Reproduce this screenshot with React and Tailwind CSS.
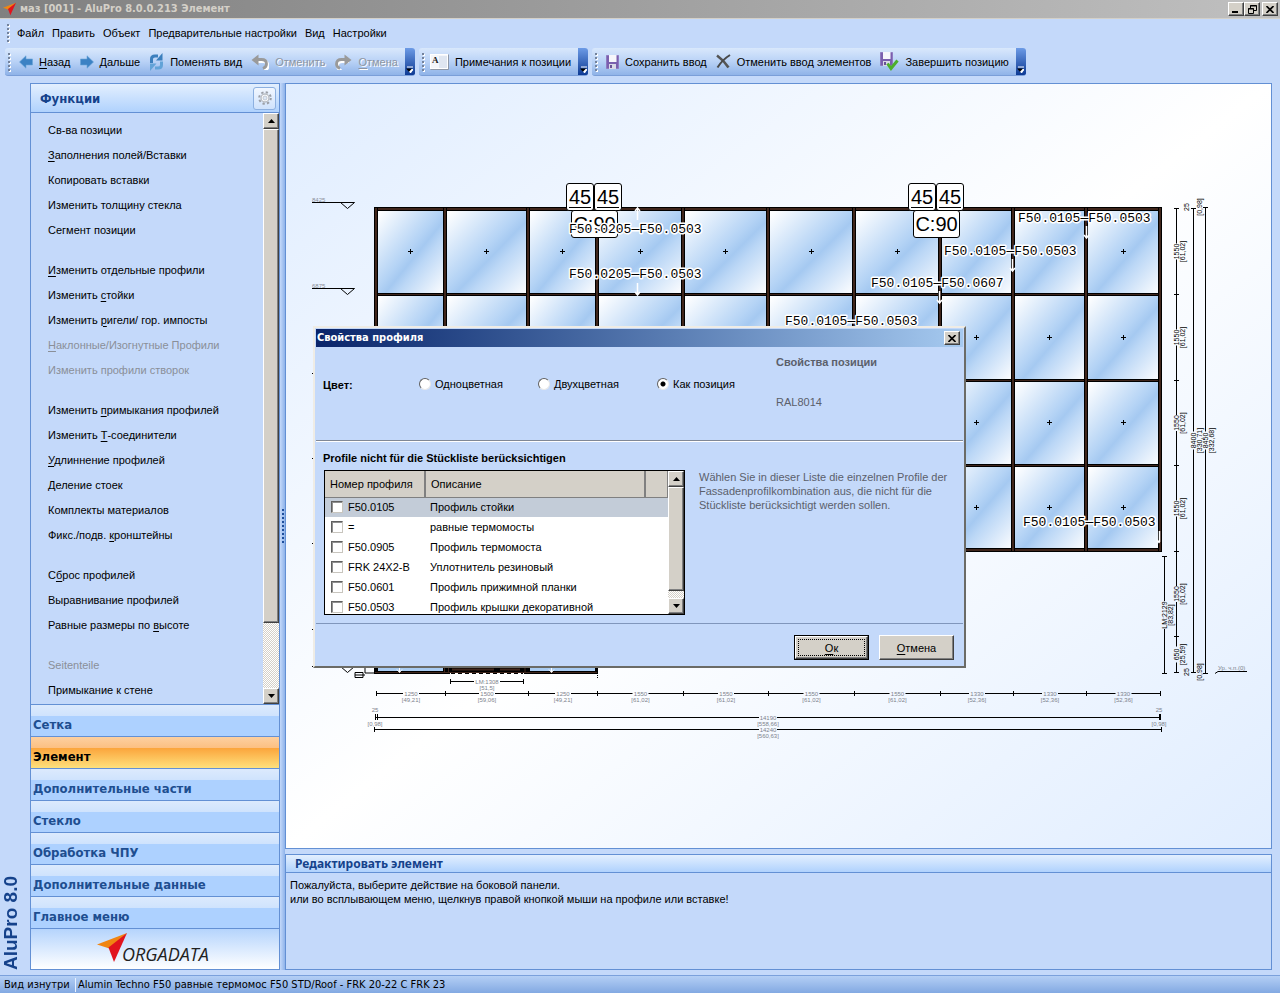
import React from 'react';

const SANS = "font-['Liberation_Sans',Arial,sans-serif]";
const HEAD = "font-['DejaVu_Sans_Condensed','DejaVu_Sans',sans-serif]";

/* "_" marks the accelerator letter that follows it */
function Accel({ text }) {
  const i = text.indexOf('_');
  if (i < 0) return <>{text}</>;
  return (
    <>
      {text.slice(0, i)}
      <span className="underline underline-offset-2">{text[i + 1]}</span>
      {text.slice(i + 2)}
    </>
  );
}

function BrandMark({ className }) {
  return (
    <svg viewBox="0 0 30 29" className={className} aria-hidden="true">
      <path d="M30 0 0 11.500 14 16z" fill="#f08512" />
      <path d="M30 0 11.500 14.500 17 29z" fill="#e1131d" />
    </svg>
  );
}

/* ---------- toolbar icons ---------- */

function ArrowLeft() {
  return (
    <svg width="14" height="14" viewBox="0 0 14 14" aria-hidden="true">
      <path d="M0.500 7 7 0.800V4h6.500v6H7v3.200z" fill="#3c82c4" stroke="#6aa5d8" strokeWidth="0.600" />
    </svg>
  );
}
function ArrowRight() {
  return (
    <svg width="14" height="14" viewBox="0 0 14 14" aria-hidden="true">
      <path d="M13.500 7 7 0.800V4H0.500v6H7v3.200z" fill="#3c82c4" stroke="#6aa5d8" strokeWidth="0.600" />
    </svg>
  );
}
function Swap() {
  return (
    <svg width="15" height="18" viewBox="0 0 15 18" aria-hidden="true">
      <path d="M2.500 10V6Q2.500 3 6 3h3" fill="none" stroke="#3b7fbd" strokeWidth="3" />
      <path d="M7 7.500h6.500V0z" fill="#3b7fbd" />
      <path d="M12.500 8.500v3.500Q12.500 15 9 15H6" fill="none" stroke="#62a3d8" strokeWidth="3" />
      <path d="M7.500 10.500H1V18z" fill="#62a3d8" />
    </svg>
  );
}
function Undo() {
  return (
    <svg width="18" height="16" viewBox="0 0 18 16" aria-hidden="true">
      <path d="M4 6.500h7q5 0 5 4.500 0 3.500-4 4.500" fill="none" stroke="#fff" strokeWidth="2.800" transform="translate(1 1)" />
      <path d="M0.500 6 7.500 0.500v11z" fill="#9a9a9a" />
      <path d="M5 5.500h5.500q5 0 5 4.500 0 3-3.500 4.500" fill="none" stroke="#9a9a9a" strokeWidth="2.800" />
    </svg>
  );
}
function Redo() {
  return (
    <svg width="18" height="16" viewBox="0 0 18 16" aria-hidden="true">
      <path d="M14 6.500H7.500q-5 0-5 4.500 0 3.500 4 4.500" fill="none" stroke="#fff" strokeWidth="2.800" transform="translate(1 1)" />
      <path d="M17.500 6 10.500 0.500v11z" fill="#9a9a9a" />
      <path d="M13 5.500H7.500q-5 0-5 4.500 0 3 3.500 4.500" fill="none" stroke="#9a9a9a" strokeWidth="2.800" />
    </svg>
  );
}
function Note() {
  return (
    <svg width="19" height="16" viewBox="0 0 19 16" aria-hidden="true">
      <rect x="0.500" y="0.500" width="17" height="14" fill="#f4f6fa" stroke="#fff" />
      <path d="M0.500 15.500h18V0.500" fill="none" stroke="#8e98a8" />
      <rect x="9" y="2" width="8" height="12" fill="#dfe6f1" />
      <text x="2" y="9" fontSize="9" fontWeight="bold" fontFamily="Liberation Serif, serif" fill="#222">A</text>
    </svg>
  );
}
function Save({ check }) {
  return (
    <svg width={check ? 19 : 13} height={check ? 19 : 14} viewBox={check ? '0 0 19 19' : '0 0 13 14'} aria-hidden="true">
      <path d="M0.500 0.500h12v13H0.500z" fill="#7a5fae" stroke="#8f7ac0" />
      <rect x="3" y="0" width="7.500" height="7" fill="#f6f6fb" />
      <rect x="3" y="9" width="7" height="5" fill="#d9d9e6" />
      <rect x="4" y="10" width="2" height="3" fill="#6a5296" />
      {check && <path d="m7.500 11.500 3.500 5 6.500-8" fill="none" stroke="#4caf2c" strokeWidth="3" />}
    </svg>
  );
}
function Cross() {
  return (
    <svg width="15" height="15" viewBox="0 0 15 15" aria-hidden="true">
      <path d="M1 1.500q7 5 11.500 12" fill="none" stroke="#555" strokeWidth="2.600" />
      <path d="M14 1Q6 6 1.500 13.500" fill="none" stroke="#4a4a4a" strokeWidth="2" />
    </svg>
  );
}
function Gear() {
  return (
    <svg width="16" height="16" viewBox="0 0 16 16" aria-hidden="true">
      <circle cx="8" cy="8" r="5.800" fill="none" stroke="#9a9ea6" strokeWidth="2" strokeDasharray="2.280 2.280" />
      <circle cx="8" cy="8" r="4" fill="#fbfcfe" stroke="#b9bdc4" strokeWidth="1.400" />
      <circle cx="8" cy="8" r="2" fill="#dce8f8" stroke="#b5b9c0" strokeWidth="0.700" />
    </svg>
  );
}

function Grip() {
  return (
    <span className="flex flex-col gap-[2px]" aria-hidden="true">
      {[0, 1, 2, 3, 4].map((i) => (
        <span key={i} className="h-[2px] w-[2px] bg-[#74839c] shadow-[1px_1px_0_#ffffff]" />
      ))}
    </span>
  );
}

function ToolStrip({ items, gap = 'gap-[9px]' }) {
  return (
    <div className="flex h-[28px] overflow-hidden rounded-[3px] border-b border-[#7a9ed8] bg-linear-to-b from-[#d9e8fc] via-[#b9d2f6] to-[#8fb3e8]">
      <div className={'flex items-center pr-[7px] pl-[3px] ' + gap}>
        <Grip />
        {items.map(({ icon: Icon, text, disabled, ...rest }) => (
          <button
            key={text}
            type="button"
            disabled={disabled}
            className={
              'flex items-center gap-[6px] whitespace-nowrap ' +
              (disabled ? 'text-[#8d95a3] [text-shadow:1px_1px_0_#fff]' : 'text-black')
            }
          >
            <Icon {...rest} />
            <span>
              <Accel text={text} />
            </span>
          </button>
        ))}
      </div>
      <button
        type="button"
        aria-label="Параметры панели"
        className="flex w-[10px] items-end justify-center bg-linear-to-b from-[#6d9be6] to-[#0d3a94] pb-[2px]"
      >
        <svg width="7" height="7" viewBox="0 0 7 7" aria-hidden="true">
          <path d="M1 1h6M2.500 3.500h4.500L4.500 7z" stroke="#fff" fill="#fff" />
          <path d="M0 2.500h6L3 5.800z" fill="#000" />
        </svg>
      </button>
    </div>
  );
}

const RAISED =
  'border border-t-white border-l-white border-r-[#404040] border-b-[#404040] bg-[#d4d0c8] shadow-[inset_-1px_-1px_0_#808080]';

function ScrollBar({ thumb, label }) {
  return (
    <div
      className="flex w-[16px] shrink-0 flex-col bg-[#ebe8e3] bg-[repeating-conic-gradient(#d4d0c8_0_25%,#ffffff_0_50%)] bg-size-[2px_2px]"
      aria-label={label}
    >
      <button type="button" aria-label="Вверх" className={'flex h-[16px] shrink-0 items-center justify-center ' + RAISED}>
        <svg width="7" height="4" viewBox="0 0 7 4" aria-hidden="true"><path d="M3.500 0 7 4H0z" /></svg>
      </button>
      <div className={thumb + ' ' + RAISED} />
      <div className="flex-1" />
      <button type="button" aria-label="Вниз" className={'flex h-[16px] shrink-0 items-center justify-center ' + RAISED}>
        <svg width="7" height="4" viewBox="0 0 7 4" aria-hidden="true"><path d="M3.500 4 7 0H0z" /></svg>
      </button>
    </div>
  );
}

/* ---------- sidebar ---------- */

const FUNCTION_GROUPS = [
  ['Св-ва позиции', '_Заполнения полей/Вставки', 'Копировать вставки', 'Изменить толщину стекла', 'Сегмент позиции'],
  ['_Изменить отдельные профили', 'Изменить _стойки', 'Изменить _ригели/ гор. импосты', '!_Наклонные/Изогнутные Профили', '!Изменить профили створок'],
  ['Изменить _примыкания профилей', 'Изменить _Т-соединители', '_Удлиннение профилей', '_Деление стоек', 'Комплекты материалов', 'Фикс./подв. _кронштейны'],
  ['С_брос профилей', 'Выравнивание профилей', 'Равные размеры по _высоте'],
  ['!Seitenteile', 'Примыкание к стене'],
];

const SECTIONS = ['Сетка', 'Элемент', 'Дополнительные части', 'Стекло', 'Обработка ЧПУ', 'Дополнительные данные', 'Главное меню'];

function Sidebar() {
  return (
    <aside className="flex w-[250px] shrink-0 flex-col border border-[#6390d4]">
      <header className="flex h-[29px] shrink-0 items-center justify-between border-b border-[#6390d4] bg-linear-to-b from-[#e3effe] to-[#b0d2fd] pr-[3px] pl-[9px]">
        <h2 className={'pt-[2px] text-[13px] font-bold text-[#15428b] ' + HEAD}>Функции</h2>
        <button type="button" aria-label="Настройка" className="flex h-[23px] w-[23px] items-center justify-center rounded-[3px] border border-[#8db0e0] bg-linear-to-b from-[#f2f7ff] to-[#cfe2fc]">
          <Gear />
        </button>
      </header>
      <div className="flex min-h-0 flex-1">
        <div className="flex min-w-0 flex-1 basis-0 flex-col gap-[15px] overflow-hidden pt-[4px] pl-[17px]">
          {FUNCTION_GROUPS.map((group) => (
            <ul key={group[0]}>
              {group.map((item) => {
                const off = item[0] === '!';
                return (
                  <li key={item} className="flex h-[25px] items-center">
                    <button type="button" disabled={off} className={'whitespace-nowrap ' + (off ? 'text-[#8a8f98]' : 'text-black')}>
                      <Accel text={off ? item.slice(1) : item} />
                    </button>
                  </li>
                );
              })}
            </ul>
          ))}
        </div>
        <ScrollBar thumb="h-[494px]" label="Прокрутка функций" />
      </div>
      <nav className={'shrink-0 text-[13px] font-bold ' + HEAD}>
        {SECTIONS.map((s) => (
          <button
            key={s}
            type="button"
            className={
              'flex h-[32px] w-full items-end border-t border-[#6390d4] pb-[2px] pl-[2px] text-left leading-[19px] ' +
              (s === 'Элемент'
                ? 'bg-[linear-gradient(#fdd0a0_0,#fcc082_35%,#fba53c_36%,#fee07c_100%)] text-black'
                : 'bg-[linear-gradient(#dceafd_0,#cfe3fd_35%,#add1ff_36%,#add1ff_100%)] text-[#1e4e90]')
            }
          >
            {s}
          </button>
        ))}
      </nav>
      <div className="flex h-[41px] shrink-0 items-start justify-center border-t border-[#6390d4] bg-linear-to-b from-[#b5d4fc] to-white pt-[4px] pr-[4px]">
        <BrandMark className="mr-[-5px] h-[29px] w-[30px]" />
        <span className="mt-[12px] font-['Open_Sans',sans-serif] text-[18px] leading-[18px] font-medium text-[#222] italic">ORGADATA</span>
      </div>
    </aside>
  );
}

/* ---------- facade drawing ---------- */

const MULLIONS = [376, 445, 528, 597, 683, 768, 854, 940, 1013, 1086, 1160];
const TRANSOMS = [209, 294, 380, 465, 550];
const DIM = 'Liberation Sans, Arial, sans-serif';

function Panes() {
  const out = [];
  for (let r = 0; r < 4; r++) {
    for (let c = 0; c < 10; c++) {
      const x = MULLIONS[c];
      const y = TRANSOMS[r];
      const w = MULLIONS[c + 1] - x;
      const h = TRANSOMS[r + 1] - y;
      const cx = Math.floor(x + w / 2) + 0.5;
      const cy = Math.floor(y + h / 2) + 0.5;
      out.push(
        <g key={r + '-' + c}>
          <rect x={x} y={y} width={w} height={h} fill="url(#glass)" />
          <path d={`M${cx - 2.5} ${cy}h5M${cx} ${cy - 2.5}v5`} stroke="#000" />
        </g>
      );
    }
  }
  return out;
}

function HDim({ x1, x2, y, label, sub, gap = 11 }) {
  const m = (x1 + x2) / 2;
  return (
    <g>
      <path d={`M${x1} ${y}H${m - gap}M${m + gap} ${y}H${x2}M${x1} ${y - 2.5}v5M${x2} ${y - 2.5}v5`} stroke="#000" />
      <text x={m} y={y + 2} textAnchor="middle">{label}</text>
      <text x={m} y={y + 8} textAnchor="middle">{sub}</text>
    </g>
  );
}

function VDim({ x, y1, y2, label, sub, gap = 10 }) {
  const m = (y1 + y2) / 2;
  return (
    <g>
      <path d={`M${x} ${y1}V${m - gap}M${x} ${m + gap}V${y2}M${x - 2.5} ${y1}h5M${x - 2.5} ${y2}h5`} stroke="#000" />
      <text transform={`translate(${x + 2} ${m}) rotate(-90)`} textAnchor="middle">{label}</text>
      <text transform={`translate(${x + 8} ${m}) rotate(-90)`} textAnchor="middle">{sub}</text>
    </g>
  );
}

function VText({ x, y, children }) {
  return <text transform={`translate(${x} ${y}) rotate(-90)`} textAnchor="middle">{children}</text>;
}

function Level({ y, label }) {
  return (
    <g>
      <path d={`M312 ${y}h42.500l-7 6-7-6`} fill="none" stroke="#000" />
      {label && <text x="312" y={y - 1} fontSize="6" fontFamily={DIM} fill="#8a8f99">{label}</text>}
    </g>
  );
}

function Plate({ x, y, w, children, underline }) {
  return (
    <g>
      <rect x={x + 0.5} y={y + 0.5} width={w - 1} height="27" rx="2.500" fill="#fff" stroke="#000" />
      <text x={x + w / 2} y={y + 20.5} textAnchor="middle" fontSize="20" fontFamily={DIM}>{children}</text>
      {underline && <path d={`M${x + 3} ${y + 24.5}h${w - 6}`} stroke="#000" />}
    </g>
  );
}

const PROFILE_LABELS = [
  [569, 233, 'F50.0205—F50.0503'],
  [569, 278, 'F50.0205—F50.0503'],
  [1018, 222, 'F50.0105—F50.0503'],
  [944, 255, 'F50.0105—F50.0503'],
  [871, 287, 'F50.0105—F50.0607'],
  [785, 325, 'F50.0105—F50.0503'],
  [1023, 526, 'F50.0105—F50.0503'],
];

const WIDTHS = [
  ['1250', '[49,21]'], ['1500', '[59,06]'], ['1250', '[49,21]'], ['1550', '[61,02]'], ['1550', '[61,02]'],
  ['1550', '[61,02]'], ['1550', '[61,02]'], ['1330', '[52,36]'], ['1330', '[52,36]'], ['1330', '[52,36]'],
];
const HEIGHTS = [208.5, 294.5, 380.5, 465.5, 551.5, 636.5, 672.5];

function FacadeDrawing() {
  return (
    <svg width="985" height="764" viewBox="286 84 985 764" className="block shrink-0" role="img" aria-label="Чертёж фасада">
      <defs>
        <linearGradient id="glass" x1="0" y1="0" x2="1" y2="1">
          <stop offset="0.050" stopColor="#fdfeff" />
          <stop offset="0.480" stopColor="#b4d3f5" />
          <stop offset="0.560" stopColor="#a5c9f1" />
          <stop offset="0.650" stopColor="#bbd7f6" />
          <stop offset="0.960" stopColor="#f7fafe" />
        </linearGradient>
      </defs>

      <Panes />
      {TRANSOMS.map((y, i) => {
        const edge = i === 0 || i === 4;
        return (
          <g key={y}>
            <rect x="374" y={edge ? y - 2 : y - 1} width="788" height={edge ? 4 : 3} fill="#000" />
            <rect x="375" y={edge ? y - 1 : y} width="786" height={edge ? 2 : 1} fill="#3f251b" />
          </g>
        );
      })}
      {MULLIONS.map((x) => (
        <g key={x}>
          <rect x={x - 2} y="207" width="4" height="345" fill="#000" />
          <rect x={x - 1} y="208" width="2" height="343" fill="#3f251b" />
        </g>
      ))}

      {/* lower storey with the door */}
      <rect x="374" y="640" width="224" height="34" fill="#000" />
      <rect x="378" y="641" width="65" height="30" fill="#a9ccf2" />
      <rect x="530" y="641" width="65" height="30" fill="#a9ccf2" />
      <path d="M375 672.500h222M444.500 641v31M448.500 641v31M525 641v31" stroke="#3f251b" />
      <path d="M452 669.500h42M500 669.500h20" stroke="#3f251b" strokeWidth="2" />
      <path d="M450 674h74" stroke="#fff" strokeWidth="2" />
      <path d="M451 673.500h72" stroke="#000" strokeDasharray="4 3" />
      <path d="M597.500 673v5" stroke="#000" strokeDasharray="1 1" />
      <path d="M355 672.500h8v5h-8zM355 675h10M365 666v7h9" fill="none" stroke="#000" />
      <path d="M399.500 666v6M397 669.500l2.500 3 2.500-3M551.500 666v6M549 669.500l2.500 3 2.500-3" fill="none" stroke="#fff" />

      <Level y={202.5} label="8425" />
      <Level y={288.5} label="6875" />
      <Level y={373.5} />
      <Level y={458.5} />
      <Level y={543.5} />
      <Level y={629.5} />
      <Level y={666.5} />

      <Plate x={566} y={183} w={28} underline>45</Plate>
      <Plate x={594} y={183} w={28} underline>45</Plate>
      <Plate x={571} y={210} w={47}>C:90</Plate>
      <Plate x={908} y={183} w={28} underline>45</Plate>
      <Plate x={936} y={183} w={28} underline>45</Plate>
      <Plate x={913} y={210} w={47}>C:90</Plate>

      <path
        d="M637.500 220v-12m-2.500 3 2.500-3 2.500 3M637.500 283v12m-2.500-3 2.500 3 2.500-3M1086.500 226v12m-2.500-3 2.500 3 2.500-3M1012.500 259v12m-2.500-3 2.500 3 2.500-3M939.500 291v12m-2.500-3 2.500 3 2.500-3M1159.500 531v11m-2.500-2 2.500 3"
        fill="none"
        stroke="#fff"
        strokeWidth="1.500"
      />
      <g fontSize="13" fontFamily="Liberation Mono, monospace" stroke="#fff" strokeWidth="3" strokeLinejoin="round" style={{ paintOrder: 'stroke' }}>
        {PROFILE_LABELS.map(([x, y, t]) => (
          <text key={x + '-' + y} x={x} y={y}>{t}</text>
        ))}
      </g>

      <g fontSize="6" fontFamily={DIM} fill="#7d828c">
        {WIDTHS.map(([label, sub], i) => (
          <HDim key={i} x1={MULLIONS[i] + 0.5} x2={MULLIONS[i + 1] + 0.5} y={693.5} label={label} sub={sub} gap={8} />
        ))}
        <HDim x1={450.5} x2={523.5} y={681.5} label="LM:1308" sub="[51,5]" gap={13} />
        <HDim x1={375.5} x2={1160.5} y={717.5} label="14190" sub="[558,66]" gap={9} />
        <HDim x1={374.5} x2={1161.5} y={729.5} label="14240" sub="[560,63]" gap={9} />
        <text x="375" y="712" textAnchor="middle">25</text>
        <text x="375" y="726" textAnchor="middle">[0,98]</text>
        <text x="1159" y="712" textAnchor="middle">25</text>
        <text x="1159" y="726" textAnchor="middle">[0,98]</text>
        <text x="1218" y="670">Ур. ч.п.(0)</text>
      </g>
      <path d="M375.500 714v6M377.500 714v6M1159.500 714v6M1160.500 714v6M1215 673.500l3-2h29" fill="none" stroke="#000" />

      <g fontSize="7" fontFamily={DIM} fill="#000">
        {HEIGHTS.slice(0, 6).map((y, i) => (
          <VDim key={y} x={1176.5} y1={y} y2={HEIGHTS[i + 1]} label={i < 5 ? '1550' : '650'} sub={i < 5 ? '[61,02]' : '[25,59]'} gap={8} />
        ))}
        <VDim x={1164.5} y1={556.5} y2={673.5} label="LM:2129" sub="[83,82]" gap={14} />
        <VDim x={1193.5} y1={208.5} y2={672.5} label="8400" sub="[330,71]" gap={9} />
        <VDim x={1205.5} y1={207.5} y2={673.5} label="8450" sub="[332,68]" gap={9} />
        <VText x={1189} y={207}>25</VText>
        <VText x={1202} y={207}>[0,98]</VText>
        <VText x={1189} y={672}>25</VText>
        <VText x={1202} y={672}>[0,98]</VText>
      </g>
    </svg>
  );
}

/* ---------- dialog ---------- */

const PROFILES = [
  ['F50.0105', 'Профиль стойки'],
  ['=', 'равные термомосты'],
  ['F50.0905', 'Профиль термомоста'],
  ['FRK 24X2-B', 'Уплотнитель резиновый'],
  ['F50.0601', 'Профиль прижимной планки'],
  ['F50.0503', 'Профиль крышки декоративной'],
];

function ProfileDialog() {
  return (
    <section
      role="dialog"
      aria-labelledby="dialog-title"
      className="absolute top-[242px] left-[27px] flex w-[653px] flex-col border-2 border-t-[#efece5] border-l-[#efece5] border-r-[#6b6b66] border-b-[#6b6b66] bg-[#c4d9fa] p-px"
    >
      <header className="flex h-[18px] items-center justify-between bg-linear-to-r from-[#0a246a] to-[#a6caf0] pr-[3px] pl-px text-white">
        <h2 id="dialog-title" className={'font-bold ' + HEAD}>Свойства профиля</h2>
        <button type="button" aria-label="Закрыть" className={'flex h-[14px] w-[16px] items-center justify-center ' + RAISED}>
          <svg width="8" height="7" viewBox="0 0 8 7" aria-hidden="true"><path d="m0.500 0 7 7m0-7-7 7" stroke="#000" strokeWidth="1.600" /></svg>
        </button>
      </header>

      <fieldset className="flex h-[95px] border-b border-white pl-[7px] shadow-[inset_0_-1px_0_#808896]">
        <span className="w-[96px] pt-[31px] font-bold">Цвет:</span>
        {['Одноцветная', 'Двухцветная', 'Как позиция'].map((t, i) => (
          <label key={t} className="flex h-[74px] w-[119px] items-center gap-[4px]">
            <input
              type="radio"
              name="colour"
              defaultChecked={i === 2}
              className="h-[12px] w-[12px] appearance-none rounded-full border border-t-[#606060] border-l-[#606060] border-r-[#e8e8e8] border-b-[#e8e8e8] bg-white checked:bg-[radial-gradient(circle,#000_0_2px,#fff_3px)]"
            />
            {t}
          </label>
        ))}
        <div className="flex flex-col gap-[26px] pt-[8px] text-[#5b606b]">
          <strong>Свойства позиции</strong>
          <span>RAL8014</span>
        </div>
      </fieldset>

      <div className="flex h-[182px] flex-col gap-[5px] border-b border-[#8096bb] pt-[9px] pl-[7px]">
        <h3 className="font-bold">Profile nicht für die Stückliste berücksichtigen</h3>
        <div className="flex gap-[14px]">
          <div className="ml-px flex h-[145px] w-[361px] border border-black bg-white">
            <div className="min-w-0 flex-1 overflow-hidden">
              <table className="w-full table-fixed border-collapse text-left">
                <thead>
                  <tr className="h-[26px] bg-[#d4d0c8]">
                    <th className="w-[100px] border-r-2 border-b border-[#808080] pl-[5px] font-normal">Номер профиля</th>
                    <th className="w-[220px] border-r-2 border-b border-[#808080] pl-[5px] font-normal">Описание</th>
                    <th className="border-r border-b border-[#808080]" aria-label="Прочее" />
                  </tr>
                </thead>
                <tbody>
                  {PROFILES.map(([no, name], i) => (
                    <tr key={no} className={'h-[20px] ' + (i === 0 ? 'bg-[#c3ccd8]' : 'bg-white')}>
                      <td className="pl-[6px]">
                        <label className="flex items-center gap-[5px] whitespace-nowrap">
                          <input
                            type="checkbox"
                            className="h-[12px] w-[12px] appearance-none border border-t-[#606060] border-l-[#606060] border-r-[#c8c5be] border-b-[#c8c5be] bg-white shadow-[inset_1px_1px_0_#909090]"
                          />
                          {no}
                        </label>
                      </td>
                      <td className="pl-[5px] whitespace-nowrap" colSpan={2}>{name}</td>
                    </tr>
                  ))}
                </tbody>
              </table>
            </div>
            <ScrollBar thumb="h-[104px]" label="Прокрутка списка" />
          </div>
          <p className="w-[250px] text-[#5b606b]">
            Wählen Sie in dieser Liste die einzelnen Profile der Fassadenprofilkombination aus, die nicht für die Stückliste berücksichtigt werden sollen.
          </p>
        </div>
      </div>

      <footer className="flex h-[41px] items-center justify-end gap-[10px] pt-[6px] pr-[9px]">
        <button type="button" className="border border-black">
          <span className={'flex h-[23px] w-[73px] items-center justify-center p-[2px] ' + RAISED}>
            <span className="flex h-full w-full items-center justify-center border border-dotted border-black"><Accel text="_Ок" /></span>
          </span>
        </button>
        <button type="button" className={'h-[25px] w-[75px] ' + RAISED}><Accel text="_Отмена" /></button>
      </footer>
    </section>
  );
}

/* ---------- page ---------- */

export default function App() {
  return (
    <div className={'flex min-h-screen flex-col bg-[#c4d9fa] text-[11px] leading-[14px] text-black ' + SANS}>
      <header className="flex h-[19px] items-center justify-between border-b border-[#d4d0c8] bg-linear-to-r from-[#808080] to-[#c0c0c0] pr-[2px] pl-[3px]">
        <div className="flex items-center gap-[4px]">
          <BrandMark className="h-[14px] w-[13px]" />
          <h1 className={'font-bold text-[#d4d0c8] ' + HEAD}>маз [001] - AluPro 8.0.0.213 Элемент</h1>
        </div>
        <div className="flex">
          <button type="button" aria-label="Свернуть" className={'flex h-[14px] w-[16px] items-end pb-[2px] pl-[3px] ' + RAISED}>
            <span className="h-[2px] w-[6px] bg-black" />
          </button>
          <button type="button" aria-label="Восстановить" className={'flex h-[14px] w-[16px] items-center justify-center ' + RAISED}>
            <svg width="9" height="9" viewBox="0 0 9 9" aria-hidden="true"><path d="M2.500 3V0.500h6v5H6M2 1h7M0.500 3.500h5v5h-5zM0 4h6" fill="none" stroke="#000" /></svg>
          </button>
          <button type="button" aria-label="Закрыть" className={'ml-[2px] flex h-[14px] w-[16px] items-center justify-center ' + RAISED}>
            <svg width="8" height="7" viewBox="0 0 8 7" aria-hidden="true"><path d="m0.500 0 7 7m0-7-7 7" stroke="#000" strokeWidth="1.600" /></svg>
          </button>
        </div>
      </header>

      <nav className="flex h-[29px] items-center gap-[8px] pb-[2px] pl-[7px]">
        <Grip />
        {['Файл', 'Править', 'Объект', 'Предварительные настройки', 'Вид', 'Настройки'].map((m) => (
          <button key={m} type="button" className="whitespace-nowrap">{m}</button>
        ))}
      </nav>

      <div className="flex gap-[4px] pl-[5px]">
        <ToolStrip
          items={[
            { icon: ArrowLeft, text: '_Назад' },
            { icon: ArrowRight, text: '_Дальше' },
            { icon: Swap, text: 'Поменять вид' },
            { icon: Undo, text: 'Отменить', disabled: true },
            { icon: Redo, text: '_Отмена', disabled: true },
          ]}
        />
        <ToolStrip gap="gap-[6px]" items={[{ icon: Note, text: 'Примечания к позиции' }]} />
        <ToolStrip
          items={[
            { icon: Save, text: 'Сохранить ввод' },
            { icon: Cross, text: 'Отменить ввод элементов' },
            { icon: Save, text: 'Завершить позицию', check: true },
          ]}
        />
      </div>

      <div className="flex flex-1 pt-[7px] pr-[8px] pb-[5px]">
        <div className="flex w-[30px] shrink-0 items-end">
          <span className="rotate-180 text-[19px] leading-[22px] font-bold text-[#15428b] [writing-mode:vertical-rl]">AluPro 8.0</span>
        </div>
        <Sidebar />
        <div className="flex w-[5px] shrink-0 items-center justify-center bg-linear-to-r from-[#c4d9fa] to-[#8fb3ea]" aria-hidden="true">
          <span className="h-[36px] w-[2px] bg-[repeating-linear-gradient(#1f4f9c_0_2px,transparent_2px_4px)]" />
        </div>
        <div className="flex min-w-0 flex-1 flex-col gap-[5px]">
          <main className="relative min-h-[766px] flex-1 border border-[#6390d4] bg-linear-to-br from-[#e0edff] via-white to-[#e0edff]">
            <div className="overflow-hidden">
              <FacadeDrawing />
            </div>
            <ProfileDialog />
          </main>
          <section className="h-[116px] shrink-0 border border-[#6390d4]">
            <h2 className="flex h-[18px] items-center border-b border-[#6390d4] bg-linear-to-b from-[#e3effe] to-[#b0d2fd] pl-[9px] font-['Noto_Sans',sans-serif] text-[12px] font-bold text-[#15428b]">
              Редактировать элемент
            </h2>
            <p className="px-[4px] pt-[5px]">
              Пожалуйста, выберите действие на боковой панели.
              <br />
              или во всплывающем меню, щелкнув правой кнопкой мыши на профиле или вставке!
            </p>
          </section>
        </div>
      </div>

      <footer className={'flex h-[18px] items-center border-t border-[#7ba1dc] bg-linear-to-b from-[#b4cff5] to-[#83a9e2] ' + HEAD}>
        <span className="w-[76px] border-r border-[#e6f0ff] pl-[4px]">Вид изнутри</span>
        <span className="pl-[2px]">Alumin Techno F50 равные термомос F50 STD/Roof - FRK 20-22 С FRK 23</span>
      </footer>
    </div>
  );
}
